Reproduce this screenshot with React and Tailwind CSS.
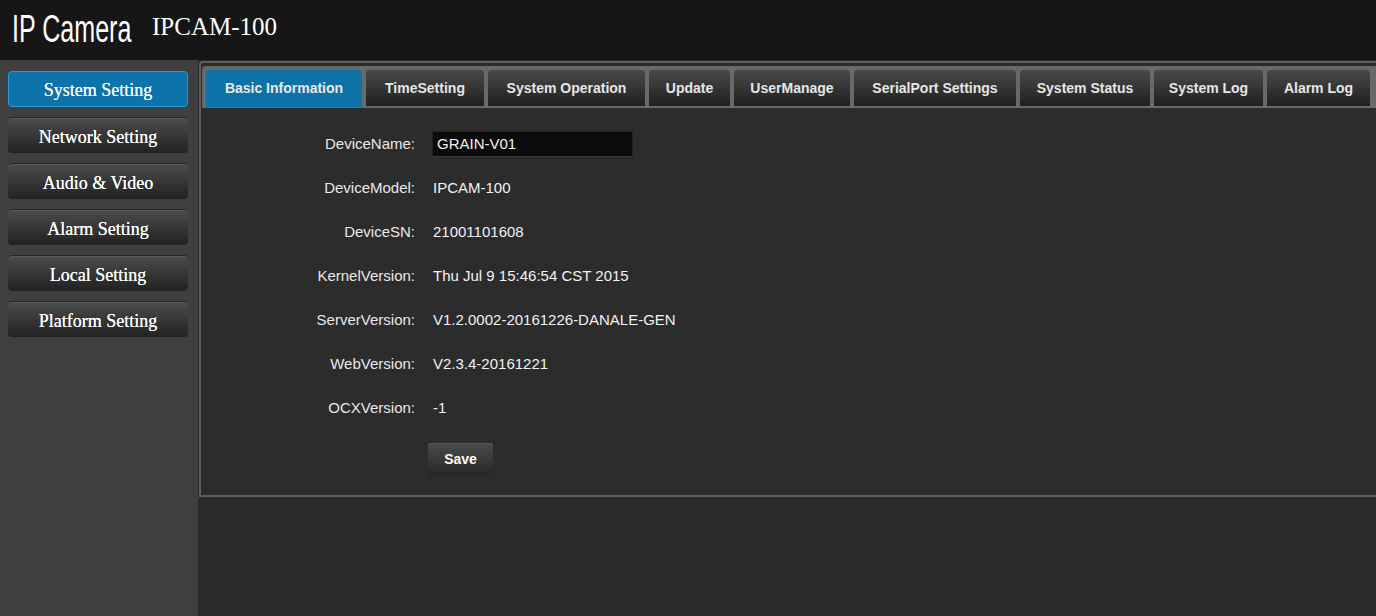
export default function App() {
  const side = [
    "System Setting",
    "Network Setting",
    "Audio & Video",
    "Alarm Setting",
    "Local Setting",
    "Platform Setting",
  ];
  const tabs = [
    ["Basic Information", "w-[156px]"],
    ["TimeSetting", "w-[118px]"],
    ["System Operation", "w-[157px]"],
    ["Update", "w-[81px]"],
    ["UserManage", "w-[116px]"],
    ["SerialPort Settings", "w-[162px]"],
    ["System Status", "w-[130px]"],
    ["System Log", "w-[109px]"],
    ["Alarm Log", "w-[103px]"],
  ];
  const rows = [
    ["DeviceModel:", "IPCAM-100"],
    ["DeviceSN:", "21001101608"],
    ["KernelVersion:", "Thu Jul 9 15:46:54 CST 2015"],
    ["ServerVersion:", "V1.2.0002-20161226-DANALE-GEN"],
    ["WebVersion:", "V2.3.4-20161221"],
    ["OCXVersion:", "-1"],
  ];
  const sans = { fontFamily: '"Liberation Sans", Arial, sans-serif' };
  const serif = { fontFamily: '"Liberation Serif", "Times New Roman", serif' };

  return (
    <div className="h-screen w-full flex flex-col bg-[#2b2b2b] overflow-hidden" style={sans}>
      <header className="h-[60px] shrink-0 bg-[#161616] flex items-start">
        <div className="w-[152px] shrink-0 pl-[12px] pt-[10px]">
          <span className="inline-block origin-left scale-x-[0.66] text-[38px] leading-none text-white whitespace-nowrap">
            IP Camera
          </span>
        </div>
        <span className="pt-[14px] text-[25px] leading-none text-white whitespace-nowrap" style={serif}>
          IPCAM-100
        </span>
      </header>

      <div className="flex flex-1 min-h-0">
        <aside className="w-[198px] shrink-0 bg-[#3f3f3f] pt-[11px] pl-[8px] flex flex-col gap-[10px]">
          {side.map((s, i) =>
            i === 0 ? (
              <div
                key={s}
                className="w-[180px] h-[36px] pt-[3px] rounded-[4px] bg-[#0d73aa] border border-[#2a96d8] flex items-center justify-center text-[18px] text-white [text-shadow:0_0_0.4px_#fff]"
                style={serif}
              >
                {s}
              </div>
            ) : (
              <div
                key={s}
                className="w-[180px] h-[36px] pt-[3px] rounded-[4px] bg-linear-to-b from-[#4c4c4c] to-[#222222] border-t border-[#262626] shadow-[inset_0_1px_0_#5a5a5a] flex items-center justify-center text-[18px] text-white [text-shadow:0_0_0.4px_#fff]"
                style={serif}
              >
                {s}
              </div>
            )
          )}
        </aside>

        <main className="flex-1 min-w-0 overflow-hidden pl-[1px] pt-[1px]">
          <div className="w-[1250px] border-l-2 border-t-2 border-b-2 border-[#5e5e5e] rounded-tl-[4px] pl-[1px] pt-[3px]">
            <div className="h-[42px] bg-[#696969] rounded-t-[4px] pl-[4px] pt-[4px] flex items-start gap-[4px]">
              {tabs.map(([t, w], i) =>
                i === 0 ? (
                  <div
                    key={t}
                    className={`${w} h-[37px] shrink-0 rounded-t-[3px] bg-[#0c72a8] flex items-center justify-center text-[14px] font-bold text-[#eaeaea] whitespace-nowrap`}
                  >
                    {t}
                  </div>
                ) : (
                  <div
                    key={t}
                    className={`${w} h-[36px] shrink-0 rounded-t-[3px] bg-linear-to-b from-[#4a4a4a] to-[#202020] flex items-center justify-center text-[14px] font-bold text-[#e6e6e6] whitespace-nowrap`}
                  >
                    {t}
                  </div>
                )
              )}
            </div>

            <div className="bg-[#2c2c2c] pt-[14px] pb-[19px]">
              <div className="flex items-center h-[44px]">
                <div className="w-[213px] text-right text-[15px] text-[#e8e8e8]">DeviceName:</div>
                <div className="ml-[17px] w-[201px] h-[26px] bg-[#0b0b0b] border border-[#222] border-b-[#3a3a3a] flex items-center pl-[4px] text-[15px] text-[#f0f0f0]">
                  GRAIN-V01
                </div>
              </div>
              {rows.map(([l, v]) => (
                <div key={l} className="flex items-center h-[44px]">
                  <div className="w-[213px] text-right text-[15px] text-[#e8e8e8]">{l}</div>
                  <div className="ml-[18px] text-[15px] text-[#f2f2f2] whitespace-nowrap">{v}</div>
                </div>
              ))}
              <div className="mt-[13px] ml-[226px]">
                <div className="w-[65px] h-[33px] rounded-[3px] bg-linear-to-b from-[#4c4c4c] to-[#262626] shadow-[inset_0_1px_0_#555] flex items-center justify-center text-[14px] font-bold text-white">
                  Save
                </div>
              </div>
            </div>
          </div>
        </main>
      </div>
    </div>
  );
}
